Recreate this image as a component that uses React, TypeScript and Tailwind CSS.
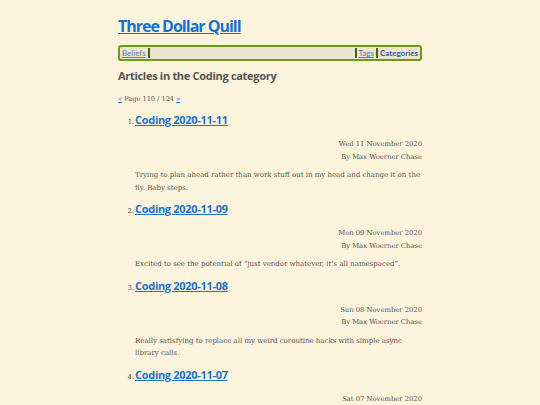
import React from "react";

const posts = [
  {
    n: 1,
    title: "Coding 2020-11-11",
    date: "Wed 11 November 2020",
    body: "Trying to plan ahead rather than work stuff out in my head and change it on the fly. Baby steps.",
  },
  {
    n: 2,
    title: "Coding 2020-11-09",
    date: "Mon 09 November 2020",
    body: "Excited to see the potential of \u201cjust vendor whatever, it\u2019s all namespaced\u201d.",
  },
  {
    n: 3,
    title: "Coding 2020-11-08",
    date: "Sun 08 November 2020",
    body: "Really satisfying to replace all my weird coroutine hacks with simple async library calls.",
  },
  {
    n: 4,
    title: "Coding 2020-11-07",
    date: "Sat 07 November 2020",
    body: "More cleanup today.",
  },
];

const head = "font-['Open_Sans','Noto_Sans',sans-serif]";
const sans = "font-['Lato','Open_Sans',sans-serif]";
const serif = "font-['DejaVu_Serif','Liberation_Serif',serif]";

export default function App() {
  return (
    <div className={`h-[405px] overflow-hidden bg-[#fbf3dc] ${serif} text-[#444]`}>
      <div className="mx-auto w-[304px] pt-[13px]">
        <h1 className={`${head} text-[16px] font-bold leading-[26px] tracking-[-1px]`}>
          <a href="#" className="text-[#1a73c8] underline">Three Dollar Quill</a>
        </h1>

        <nav
          className={`${sans} mt-[6px] flex h-[16px] items-stretch rounded-[3px] border-2 border-[#6a9a1c] bg-[#ece4cf] px-[2px] py-[1px] text-[8px] leading-[10px]`}
        >
          <a href="#" className="border-r-2 border-[#3b6a10] pr-[2px] text-[#5a7fb0] underline">Beliefs</a>
          <div className="flex-1" />
          <a href="#" className="border-l-2 border-[#3b6a10] px-[2px] text-[#5a7fb0] underline">Tags</a>
          <a href="#" className="border-l-2 border-[#3b6a10] pl-[2px] font-bold text-[#2b5f9e]">Categories</a>
        </nav>

        <h2 className={`${head} mt-[6px] text-[11px] font-bold leading-[18px] tracking-[-0.3px] text-[#555]`}>
          Articles in the Coding category
        </h2>

        <p className="mt-[9px] text-[6.6px] leading-[10px] text-[#555]">
          <a href="#" className="text-[#1a73c8] underline">«</a> Page 110 / 124{" "}
          <a href="#" className="text-[#1a73c8] underline">»</a>
        </p>

        <ol className="mt-[6px] pl-[17px]">
          {posts.map((p) => (
            <li key={p.n} className="mb-[5px]">
              <div className="-ml-[10px] flex items-baseline">
                <span className="w-[10px] shrink-0 pr-[1px] text-right text-[6.6px]">{p.n}.</span>
                <a
                  href="#"
                  className={`${head} text-[11px] font-bold leading-[20px] tracking-[-0.3px] text-[#1a73c8] underline`}
                >
                  {p.title}
                </a>
              </div>
              <div className="mt-[8px] text-right text-[6.8px] leading-[12.5px] text-[#555]">
                <div>{p.date}</div>
                <div>By Max Woerner Chase</div>
              </div>
              <p className="mt-[6px] text-[7px] leading-[12.5px] text-[#555]">{p.body}</p>
            </li>
          ))}
        </ol>
      </div>
    </div>
  );
}
